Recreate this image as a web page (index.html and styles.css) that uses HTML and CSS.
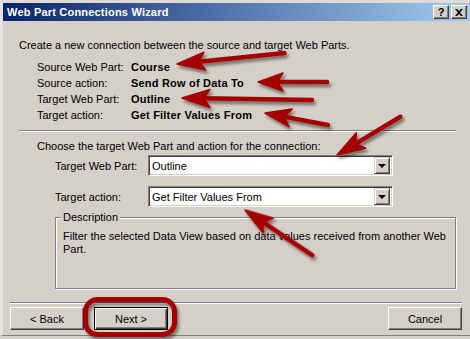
FILE: index.html
```html
<!DOCTYPE html>
<html lang="en">
<head>
    <meta charset="UTF-8">
    <title>Web Part Connections Wizard</title>
    <link rel="stylesheet" href="styles.css">
</head>
<body>
<div class="window">
    <div class="titlebar">
        <span class="title">Web Part Connections Wizard</span>
        <div class="caps">
            <span class="cap">?</span>
            <span class="cap">
                <svg width="8" height="7" viewBox="0 0 8 7"><path d="M0 0h2l2 2 2-2h2L5 3.5 8 7H6L4 5 2 7H0l3-3.5z" fill="#000"/></svg>
            </span>
        </div>
    </div>

    <div class="content">
        <p class="intro">Create a new connection between the source and target Web Parts.</p>
        <div class="summary">
            <span>Source Web Part:</span><b>Course</b>
            <span>Source action:</span><b>Send Row of Data To</b>
            <span>Target Web Part:</span><b>Outline</b>
            <span>Target action:</span><b>Get Filter Values From</b>
        </div>

        <div class="sep"></div>

        <p class="choose">Choose the target Web Part and action for the connection:</p>
        <div class="field">
            <span class="label">Target Web Part:</span>
            <div class="combo"><span class="combo-text">Outline</span><span class="drop"><i></i></span></div>
        </div>
        <div class="field">
            <span class="label">Target action:</span>
            <div class="combo"><span class="combo-text">Get Filter Values From</span><span class="drop"><i></i></span></div>
        </div>

        <div class="group">
            <span class="group-title">Description</span>
            <p class="group-text">Filter the selected Data View based on data values received from another Web<br>Part.</p>
        </div>
    </div>

    <div class="sep bottom-sep"></div>

    <div class="buttons">
        <span class="btn">&lt; Back</span>
        <span class="btn default">Next &gt;</span>
        <span class="btn cancel">Cancel</span>
    </div>
</div>

<!-- annotations drawn over the screenshot -->
<svg class="marks" width="470" height="339" viewBox="0 0 470 339">
    <defs>
        <filter id="shadow" x="-20%" y="-20%" width="140%" height="160%">
            <feDropShadow dx="2" dy="3" stdDeviation="1.6" flood-color="#000" flood-opacity="0.45"/>
        </filter>
    </defs>
    <g class="arrows" filter="url(#shadow)">
        <g transform="translate(177 64) rotate(-5.8)">
            <line x1="20" y1="0" x2="108" y2="0"/><path d="M0 0L28 -9L22 0L28 9Z"/>
        </g>
        <g transform="translate(258 82)">
            <line x1="18" y1="0" x2="69" y2="0"/><path d="M0 0L25 -9L19 0L25 9Z"/>
        </g>
        <g transform="translate(182 98) rotate(0.9)">
            <line x1="20" y1="0" x2="130" y2="0"/><path d="M0 0L28 -9L22 0L28 9Z"/>
        </g>
        <g transform="translate(265 113) rotate(10.8)">
            <line x1="18" y1="0" x2="64" y2="0"/><path d="M0 0L26 -9L20 0L26 9Z"/>
        </g>
        <g transform="translate(337 155) rotate(-31.1)">
            <line x1="20" y1="0" x2="74" y2="0"/><path d="M0 0L28 -9L22 0L28 9Z"/>
        </g>
        <g transform="translate(245 210) rotate(33.9)">
            <line x1="20" y1="0" x2="81" y2="0"/><path d="M0 0L28 -9L22 0L28 9Z"/>
        </g>
        <rect x="85.5" y="299.5" width="89" height="35" rx="12" ry="12"/>
    </g>
</svg>
</body>
</html>
```

FILE: styles.css
```css
*{
    box-sizing: border-box;
}
html, body{
    margin: 0;
}
body{
    position: relative;
    width: 470px;
    height: 339px;
    overflow: hidden;
    background-color: #D4D0C8;
    font-family: "Liberation Sans", Arial, sans-serif;
    font-size: 11px;
    color: #000;
}
p{
    margin: 0;
}
.window{
    height: 336px;
    border-top: 3px solid #DEDBD5;
    border-left: 3px solid #E4E2DD;
    border-bottom: 1px solid #808080;
}
.titlebar{
    display: flex;
    align-items: center;
    height: 18px;
    padding-left: 4px;
    background: linear-gradient(to right, #0A246A, #A6CAF0);
}
.title{
    color: #fff;
    font-weight: bold;
    font-size: 11px;
    letter-spacing: 0.2px;
}
.caps{
    display: flex;
    gap: 2px;
    margin-left: auto;
    padding-right: 3px;
}
.cap{
    display: flex;
    align-items: center;
    justify-content: center;
    width: 16px;
    height: 14px;
    background-color: #D4D0C8;
    border: 1px solid;
    border-color: #fff #404040 #404040 #fff;
    box-shadow: inset -1px -1px #808080;
    font-weight: bold;
    font-size: 11px;
    line-height: 12px;
}
.content{
    padding: 0 14px 0 16px;
}
.intro{
    margin-top: 16px;
    line-height: 16px;
}
.summary{
    display: grid;
    grid-template-columns: 94px auto;
    margin-top: 6px;
    padding-left: 18px;
    line-height: 16px;
}
.summary b{
    letter-spacing: 0.2px;
}
.sep{
    height: 2px;
    margin-top: 7px;
    border-top: 1px solid #808080;
    border-bottom: 1px solid #fff;
}
.choose{
    margin-top: 6px;
    padding-left: 18px;
    line-height: 16px;
}
.field{
    display: flex;
    align-items: center;
    margin-top: 10px;
    padding-left: 36px;
}
.choose + .field{
    margin-top: 1px;
}
.label{
    width: 93px;
}
.combo{
    display: flex;
    align-items: center;
    width: 245px;
    height: 21px;
    padding: 2px;
    background-color: #fff;
    border: 1px solid;
    border-color: #808080 #fff #fff #808080;
    box-shadow: inset 1px 1px #404040, inset -1px -1px #D4D0C8;
}
.combo-text{
    flex: 1;
    padding-left: 1px;
}
.drop{
    display: flex;
    align-items: center;
    justify-content: center;
    width: 16px;
    height: 17px;
    background-color: #D4D0C8;
    border: 1px solid;
    border-color: #D4D0C8 #404040 #404040 #D4D0C8;
    box-shadow: inset 1px 1px #fff, inset -1px -1px #808080;
}
.drop i{
    width: 0;
    height: 0;
    border-left: 4px solid transparent;
    border-right: 4px solid transparent;
    border-top: 4px solid #000;
}
.group{
    height: 72px;
    margin: 10px 0 0 36px;
    border: 1px solid #808080;
    box-shadow: inset 1px 1px #fff, 1px 1px #fff;
}
.group-title{
    display: block;
    width: fit-content;
    margin: -7px 0 0 5px;
    padding: 0 2px;
    line-height: 13px;
    background-color: #D4D0C8;
}
.group-text{
    margin-top: 6px;
    padding-left: 7px;
    line-height: 13px;
}
.bottom-sep{
    margin: 13px 8px 0 7px;
}
.buttons{
    display: flex;
    gap: 10px;
    margin-top: 3px;
    padding: 0 8px 0 7px;
}
.btn{
    display: flex;
    align-items: center;
    justify-content: center;
    width: 74px;
    height: 23px;
    background-color: #D4D0C8;
    border: 1px solid;
    border-color: #fff #404040 #404040 #fff;
    box-shadow: inset -1px -1px #808080;
}
.btn.default{
    border-color: #000;
    box-shadow: inset 1px 1px #fff, inset -1px -1px #404040, inset -2px -2px #808080;
}
.btn.cancel{
    margin-left: auto;
}
.marks{
    position: absolute;
    top: 0;
    left: 0;
    pointer-events: none;
}
.arrows line{
    stroke: #A50000;
    stroke-width: 4.5;
    stroke-linecap: round;
}
.arrows path{
    fill: #A50000;
    stroke: #A50000;
    stroke-width: 1.5;
    stroke-linejoin: round;
}
.arrows rect{
    fill: none;
    stroke: #A50000;
    stroke-width: 5;
}
```
